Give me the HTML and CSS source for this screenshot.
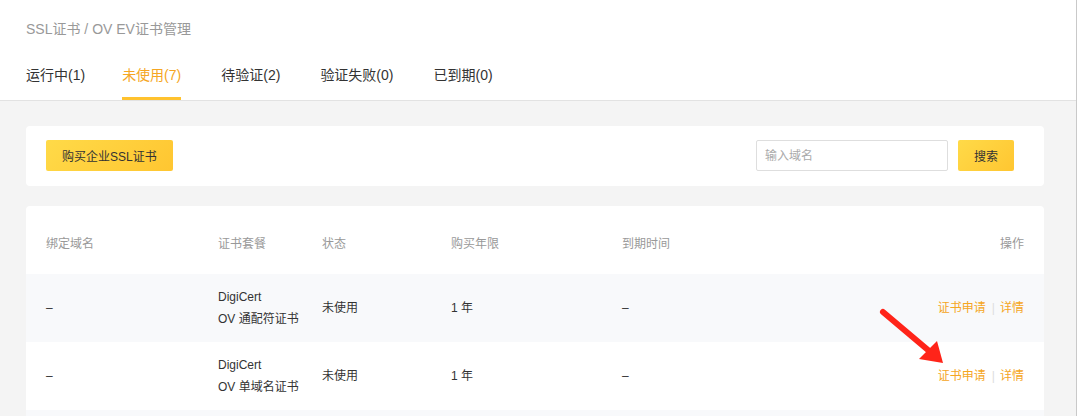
FILE: index.html
```html
<!DOCTYPE html>
<html lang="zh-CN">
  <head>
    <meta charset="UTF-8" />
    <meta name="viewport" content="width=device-width, initial-scale=1.0" />
    <title>OV EV证书管理</title>
    <link rel="stylesheet" href="styles.css">
  </head>
  <body>
    <div class="page">
      <!-- 顶部：面包屑 + 标签 -->
      <div class="header">
        <div class="breadcrumb">SSL证书 / OV EV证书管理</div>
        <div class="tabs">
          <div class="tab">运行中(1)</div>
          <div class="tab active">未使用(7)</div>
          <div class="tab">待验证(2)</div>
          <div class="tab">验证失败(0)</div>
          <div class="tab">已到期(0)</div>
        </div>
      </div>

      <div class="main">
        <div class="card toolbar">
          <button class="btn-yellow">购买企业SSL证书</button>
          <div class="search">
            <input class="search-input" type="text" placeholder="输入域名" />
            <button class="btn-yellow btn-search">搜索</button>
          </div>
        </div>

        <div class="card list">
          <table class="cert-table">
            <thead>
              <tr>
                <th class="col-domain">绑定域名</th>
                <th class="col-plan">证书套餐</th>
                <th class="col-status">状态</th>
                <th class="col-years">购买年限</th>
                <th class="col-expire">到期时间</th>
                <th class="col-ops">操作</th>
              </tr>
            </thead>
            <tbody>
              <tr>
                <td>–</td>
                <td>DigiCert<br />OV 通配符证书</td>
                <td>未使用</td>
                <td>1 年</td>
                <td>–</td>
                <td class="ops"><a href="#">证书申请</a><span class="sep">|</span><a href="#">详情</a></td>
              </tr>
              <tr>
                <td>–</td>
                <td>DigiCert<br />OV 单域名证书</td>
                <td>未使用</td>
                <td>1 年</td>
                <td>–</td>
                <td class="ops"><a href="#">证书申请</a><span class="sep">|</span><a href="#">详情</a></td>
              </tr>
              <tr class="row-empty">
                <td colspan="6"></td>
              </tr>
            </tbody>
          </table>
        </div>
      </div>

      <!-- 标注箭头 -->
      <svg class="arrow" width="70" height="62" viewBox="0 0 70 62">
        <line x1="5" y1="6" x2="50" y2="44" stroke="#ff2419" stroke-width="6" stroke-linecap="round" />
        <polygon points="65,57 41,53 59,35" fill="#ff2419" />
      </svg>
    </div>
  </body>
</html>
```

FILE: styles.css
```css
* {
  box-sizing: border-box;
  margin: 0;
  padding: 0;
}

body {
  background: #f4f4f4;
  color: #333;
  font-family: "Liberation Sans", "Noto Sans CJK SC", sans-serif;
}

.page {
  position: relative;
  min-height: 100vh;
  border-right: 1px solid #c9c9c9;
}

.header {
  background: #fff;
  padding: 19px 26px 0;
  border-bottom: 1px solid #e2e2e2;
}

.breadcrumb {
  font-size: 14px;
  line-height: 20px;
  color: #999;
}

.tabs {
  display: flex;
  gap: 40px;
  margin-top: 26px;
}

.tab {
  font-size: 14px;
  line-height: 20px;
  padding-bottom: 12px;
  border-bottom: 3px solid transparent;
  color: #333;
}

.tab:first-child {
  margin-right: -3px;
}

.tab.active {
  color: #f5a623;
  border-bottom-color: #ffc22e;
}

.main {
  padding: 25px 32px 0 26px;
}

.card {
  background: #fff;
  border-radius: 4px;
}

.toolbar {
  display: flex;
  justify-content: space-between;
  align-items: center;
  padding: 14px 30px 15px 20px;
}

.btn-yellow {
  height: 31px;
  padding: 0 16px;
  border: none;
  border-radius: 2px;
  background: linear-gradient(135deg, #ffda48, #ffc631);
  color: #333;
  font-size: 12px;
  font-family: inherit;
}

.search {
  display: flex;
  gap: 10px;
}

.search-input {
  width: 192px;
  height: 31px;
  border: 1px solid #dedede;
  border-radius: 2px;
  padding: 0 8px;
  font-size: 12px;
  font-family: inherit;
}

.search-input::placeholder {
  color: #aaa;
}

.btn-search {
  width: 56px;
  padding: 0;
}

.list {
  margin-top: 20px;
  overflow: hidden;
}

.cert-table {
  width: 100%;
  border-collapse: collapse;
  table-layout: fixed;
  font-size: 12px;
}

.cert-table th {
  height: 68px;
  padding-top: 4px;
  font-weight: normal;
  color: #999;
  text-align: left;
}

.cert-table td {
  height: 68px;
  line-height: 22px;
  text-align: left;
}

.cert-table tbody tr:nth-child(odd) {
  background: #f8f9fb;
}

.cert-table th:first-child,
.cert-table td:first-child {
  padding-left: 20px;
}

.col-domain { width: 192px; }
.col-plan { width: 104px; }
.col-status { width: 129px; }
.col-years { width: 171px; }
.col-expire { width: 200px; }

.cert-table .col-ops,
.cert-table .ops {
  text-align: right;
  padding-right: 20px;
}

.ops a {
  color: #f5a623;
  text-decoration: none;
}

.sep {
  color: #ddd;
  margin: 0 5px 0 6px;
}

.arrow {
  position: absolute;
  left: 878px;
  top: 306px;
}
```
